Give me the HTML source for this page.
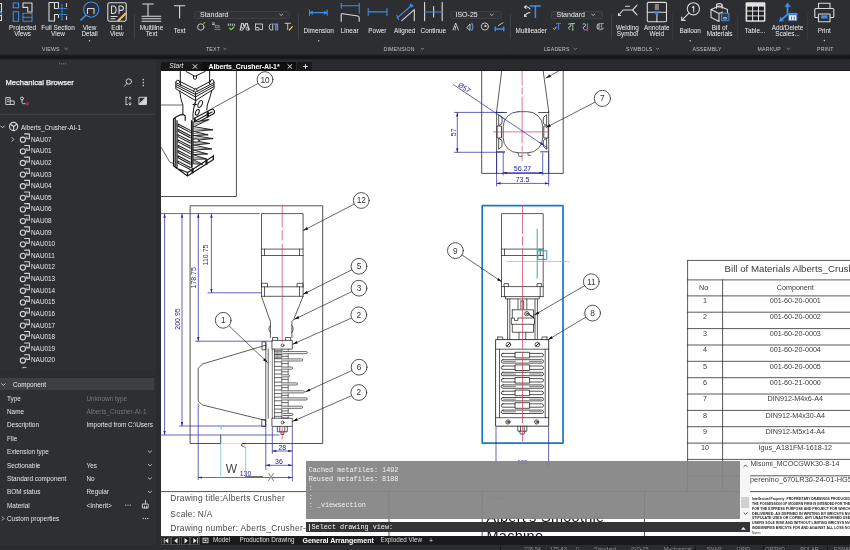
<!DOCTYPE html>
<html lang="en">
<head>
<meta charset="utf-8">
<title>Alberts_Crusher-AI-1 - Mechanical Drawing</title>
<style>
*{box-sizing:border-box;margin:0;padding:0}
html,body{width:850px;height:550px;overflow:hidden;background:#1c1c1e}
body{position:relative;filter:blur(.4px);font-family:"Liberation Sans",sans-serif;color:#e4e4e4;font-size:6.5px;line-height:1}
.abs{position:absolute}
#ribbon{position:absolute;left:0;top:0;width:850px;height:55px;background:#2c2e32}
#band{position:absolute;left:0;top:54px;width:850px;height:6px;background:linear-gradient(#2a2c30 0%,#18191b 30%,#141516 55%,#18191b 75%,#2b2d31 100%)}
#panel{position:absolute;left:0;top:60px;width:156px;height:485px;background:#2d2f33}
#pstrip{position:absolute;left:156px;top:60px;width:5px;height:485px;background:#292b2e}
#topgap{position:absolute;left:161px;top:60px;width:689px;height:2px;background:#2a2b2e}
#tabbar{position:absolute;left:161px;top:62px;width:689px;height:9px;background:#2a2b2e;border-bottom:1px solid #161617}
#canvas{position:absolute;left:161px;top:71px;width:689px;height:465px;background:#fff;overflow:hidden}
#btabs{position:absolute;left:161px;top:536px;width:689px;height:9px;background:#1a1a1c}
#status{position:absolute;left:0;top:545px;width:850px;height:5px;background:#2b2c30;overflow:hidden}
.rl{position:absolute;text-align:center;white-space:nowrap;font-size:6.4px;line-height:5.8px;color:#efefef;transform:translateX(-50%)}
.gl{position:absolute;white-space:nowrap;font-size:5.2px;color:#c2c2c4;letter-spacing:.2px;top:46.5px}
.sep{position:absolute;width:1px;background:#3d4045;top:14px;height:25px}
.dd{position:absolute;height:8px;top:11px;border:1px solid #3c3f44;border-radius:1.5px;background:#303236;font-size:7px;line-height:6px;color:#f0f0f0;padding-left:5px}
.tr{position:absolute;left:0;width:156px;height:11.68px;font-size:6.4px;color:#e6e6e6;white-space:nowrap}
.tr span{position:absolute;top:3.1px}
.pr{position:absolute;left:0;width:156px;height:13.4px;font-size:6.4px;color:#e6e6e6;white-space:nowrap}
.pr b{position:absolute;left:7px;top:4.2px;font-weight:normal}
.pr i{position:absolute;left:86.5px;top:4.2px;font-style:normal}
.pr i.dim{color:#77777a}
</style>
</head>
<body>
<div id="ribbon">
<div class="dd" style="left:194px;width:96px">Standard</div>
<div class="dd" style="left:449.500px;width:52px">ISO-25</div>
<div class="dd" style="left:550.500px;width:52px">Standard</div>
<svg class="abs" style="left:0;top:0" width="850" height="55" viewBox="0 0 850 55" fill="none" stroke-linecap="round" stroke-linejoin="round">
<g stroke="#d9d9d9" stroke-width="1.1">
<!-- cut-off icon far left -->
<path d="M0 3.5h1.5v8.5h-1.5M0 15.5h1.5v5h-1.5"/>
<!-- Projected views -->
<path d="M23 3h9v9h-4.2v-4.6h-4.8z"/>
<!-- Full section -->
<path d="M49 2.5h5.5v6h4v-3M49 2.5v18.5h5.5v-6.5h4v3M58.5 5.5v-3h-3" />
<!-- View detail inner -->
<path d="M87.5 13.5v-5h6.5v5"/>
<!-- Edit view -->
<rect x="107.8" y="2.8" width="18.4" height="18.4" rx="1.6"/>
<path d="M111.5 6v7.5h1.6q3 0 3-3.7t-3-3.8zM119 13.5v-7.5h2.2q2.2 0 2.200 2.200t-2.200 2.200h-2.200M111 16.500h6M111 18.800h4"/>
<!-- Multiline text -->
<path d="M142.700 4h10.600M148 4v12M142 16.300h18.800M142 18.800h18.800M142 21.200h18.800"/>
<!-- Text -->
<path d="M174.400 5.800h10.400M179.600 5.800v12.200"/>
<!-- Linear lower -->
<path d="M341.200 21.300v-6.500q0-1.300 1.500-1.100l15.200 2.300q1.300.2 1.300 1.500v3.800"/>
<!-- Aligned -->
<path d="M401.800 20.600l12.500-11v11"/>
<!-- Continue -->
<path d="M424.600 2.200v18.400M442.200 2.200v18.400M433.600 6.600v10.400"/>
<!-- Multileader arrows -->
<path d="M530 9q-1.500-3-5.500-2M524.500 7l1.800-1.200M524.500 7l1.500 1.400M530 12.500q-4 .5-5.500 4M524.500 16.500l.2-2M524.500 16.500l2-.3"/>
<!-- Welding -->
<path d="M618.500 15.500l4.500-5.500h9.500l4.500-4.800M632.500 10l4.500 4.800M618.500 15.500v-2M618.500 15.500h2M625.500 6.300h4"/>
<!-- Annotate weld -->
<rect x="647.300" y="2.400" width="19.200" height="19.400" rx="1.200"/>
<path d="M647.300 12.200h19.200M656.900 12.200v9.600M655.300 5h3.200M655.300 7h3.200M655.300 9h3.200"/>
<!-- Balloon -->
<circle cx="693.400" cy="8.800" r="6.100"/>
<path d="M689 13.200l-7.300 7.200M681.700 20.400v-3.400M681.700 20.400h3.400M692.300 7.500l1.400-1.200v5.600" />
<!-- BOM -->
<path d="M711 9.500l8-3.500 8.500 3.500v3M711 9.500v8l8 4v-8zM719 13.500l3.500-1.500"/>
<ellipse cx="719.300" cy="5.300" rx="2.800" ry="1.700"/>
<path d="M716.500 5.300v3M722.100 5.300v3"/>
<!-- Print -->
<path d="M818.500 8.500v-5.300h11.500v5.300M818 17.500h-2.200q-1 0-1-1v-7q0-1 1-1h17q1 0 1 1v7q0 1-1 1h-2.300M818.500 14v7.800h11.500v-7.800z"/>
</g>
<!-- Table icon -->
<rect x="745.600" y="2.300" width="19.800" height="19.500" rx="1.200" fill="#e3e3e3"/>
<g fill="#1f1f22"><rect x="747.200" y="6.600" width="4.900" height="3.900"/><rect x="753.100" y="6.600" width="4.900" height="3.900"/><rect x="759" y="6.600" width="4.900" height="3.900"/><rect x="747.200" y="11.500" width="4.900" height="3.900"/><rect x="753.100" y="11.500" width="4.900" height="3.900"/><rect x="759" y="11.500" width="4.900" height="3.900"/><rect x="747.200" y="16.400" width="4.900" height="3.900"/><rect x="753.100" y="16.400" width="4.900" height="3.900"/><rect x="759" y="16.400" width="4.900" height="3.900"/></g>
<g stroke="#3d8fe8" stroke-width="1.100">
<!-- cut-off icon -->
<path d="M0 12.500q1.800.5 1.800 2"/>
<!-- Projected views blue -->
<rect x="13.200" y="3" width="5.400" height="4.800"/>
<rect x="13.200" y="11.800" width="5.400" height="9.400"/>
<rect x="23" y="13.200" width="9" height="8" stroke-dasharray="1.600 1.100"/>
<path d="M23 17.200h9" stroke-dasharray="1.600 1.100"/>
<!-- Full section blue dashes -->
<path d="M62 4.500v15.500M58.500 8.500h8.500M58.500 14.500h8.500" stroke-dasharray="1.500 1.300"/>
<path d="M66.500 3.500v3M66.500 16.500v3" stroke="#d9d9d9"/>
<!-- View detail -->
<circle cx="91.200" cy="9.600" r="7.600"/>
<path d="M85.800 15.200l-4.800 4.900" stroke-width="1.500"/>
<!-- Dimension -->
<path d="M309.500 12.600h17.600M309.500 10v5.200M327.200 10v5.200" />
<path d="M310 12.600l2.500-1.600v3.200zM326.700 12.600l-2.500-1.600v3.200z" fill="#3d8fe8" stroke-width=".5"/>
<!-- Linear top -->
<path d="M341.200 5.800h18M341.200 3.300v5M359.200 3.300v9.700"/>
<!-- Power -->
<path d="M368.200 11.900h18.800M368.200 8.500v6.900M387 8.500v6.900"/>
<!-- Aligned blue -->
<path d="M397.200 17.800l14.300-12.300M396.800 15.200l1.800 4.200M410.300 4l2.600 2.300"/>
<path d="M412.200 4.800l-2.600.5 1.800 1.900z" fill="#3d8fe8" stroke-width=".5"/>
<!-- Continue blue -->
<path d="M424.600 12h17.600"/>
<!-- Multileader T -->
<path d="M530.200 5.900h10.200M535.400 5.900v11.600" stroke-width="1.500"/>
<!-- Annotate weld triangle -->
<path d="M654 11.500h5.800l-2.900 3.700z" fill="#3d8fe8" stroke-width=".5"/>
<!-- BOM small box -->
<rect x="721.500" y="13.300" width="7.500" height="7.500" rx="1" fill="#26415f" stroke="#4a86c8"/>
<path d="M724 17.500h2.500v1.500h-2.500z" stroke="#cfd8e3" stroke-width=".7"/>
<!-- Add/Delete scales -->
<path d="M787.500 5v9.500l-6.500 5.500" stroke-width="1.700"/>
<path d="M787.500 3.200l-2.600 3.400h5.200zM779.500 21.200l1-4 3 3.200z" fill="#3d8fe8" stroke-width=".6"/>
<rect x="789" y="13.400" width="7.800" height="7.200" fill="#e8e8e8" stroke="#4a86c8" stroke-width=".9"/>
<path d="M789 14.400h7.800" stroke="#3d8fe8" stroke-width="1.600"/>
<path d="M791.500 17v2.200M794.300 17v2.200" stroke="#555" stroke-width=".8"/>
<!-- Print blue -->
<rect x="821" y="15.300" width="6.500" height="3.200" fill="#3d8fe8" stroke="none"/>
</g>
<!-- Edit view pencil -->
<path d="M118.500 20.500l6.800-6.800" stroke="#f2c230" stroke-width="2.200"/>
<path d="M117.800 21.300l1-2 1 1z" fill="#ddd" stroke="none"/>
<!-- small text icons row 1 -->
<g stroke="#d0d0d0" stroke-width=".9">
<circle cx="200.800" cy="27" r="3.200"/><path d="M203.500 23.800l1.500-1.500" stroke="#e8d44a"/>
<path d="M212.500 23h2M212.500 24.600h2" /><path d="M215.500 25.500h3.500v2h-3.500zM215 29.500h5" stroke="#4a86e8" stroke-width="1.200"/>
<path d="M228.300 24v1.500M230.300 24v1.500M232.300 24v1.500M234.300 24v1.500" /><path d="M229.500 28.200l1.600 1.500 2.800-2.700" stroke="#7ed321" stroke-width="1.200"/>
<path d="M240.200 30l1.500-6.500h1.500l1.300 4 1.300-4h1.500l1.500 6.500" stroke-width="1.200"/><circle cx="241.800" cy="28.800" r="1.500"/><circle cx="247.600" cy="28.800" r="1.500"/>
<path d="M255.500 24h7v5.500h-2.500M255.500 24v3M256 27.500h3v2.500h-3z"/>
<path d="M271 24q-1.800 0-1.800 3t1.800 3h1.700v-6" /><path d="M274 24.200h3.500v5.800M275.800 24.200v5.800" stroke="#6c8fd6" stroke-width="1.300"/>
<path d="M285 23.300h5.500M287.700 23.300v6.200" /><path d="M289.300 30l3-3.300" stroke="#e8d44a" stroke-width="1.200"/>
<!-- dimension small icons -->
<path d="M453 30l2.700-7 2.700 7M455 30l.7-3.500" />
<path d="M467 27.500l3-3.500v6z"/><path d="M471.800 23.200q2 3.500 0 7" stroke="#5a8fe0" stroke-width="1.200"/>
<circle cx="484.900" cy="26.500" r="3.600"/><circle cx="485.300" cy="26" r=".7" fill="#d0d0d0"/>
<path d="M495.300 27v3.800M503.700 27v3.800M495.300 29h8.400" stroke="#3d8fe8" stroke-width="1.500"/><path d="M498.500 25.500l4.500-2.800" stroke="#e8d8a0"/>
<!-- leaders small icons -->
<path d="M553.500 28.500l1.200 1 1.500-2.500"/><path d="M556.500 23.500h4M558.500 23.500v5.800" stroke="#4a78e0" stroke-width="1.200"/>
<path d="M568.500 24q1.500-1 2.500.5t-2 2.500q-1 1 .5 2.500" /><path d="M571 23.500h3.500M572.800 23.500v6" stroke="#9fc7b0"/><circle cx="572.700" cy="30" r=".8" fill="#9ad14a" stroke="none"/>
<path d="M583 24q1.500-1 2.500.5t-2 2.500q-1 1 .5 2.500"/><path d="M587.500 23.500v6.300h-3" stroke="#5a78d8" stroke-width="1.200"/><circle cx="587.500" cy="30" r="1" fill="#e0302a" stroke="none"/>
<path d="M597.500 24.500q-1 2 0 4.500h1.500v-4.500z"/><path d="M599 23.500h4.500M601.500 23.500v4q0 2-2 2.500" stroke="#6c8fd6" stroke-width="1.100"/><path d="M601.500 30l2-2" />
</g>
<!-- dropdown chevrons -->
<g stroke="#bdbdbd" stroke-width=".9"><path d="M279.700 14.200l1.500 1.300 1.500-1.300M490.300 14.200l1.500 1.300 1.500-1.300M591.700 14.200l1.500 1.300 1.500-1.300"/></g>
<!-- group chevrons -->
<g stroke="#9d9da0" stroke-width=".8"><path d="M64.800 48.300l1.300 1.200 1.300-1.200M223.700 48.300l1.300 1.200 1.300-1.200M421.100 48.300l1.300 1.200 1.300-1.200M574 48.300l1.300 1.200 1.300-1.200M656.100 48.300l1.300 1.200 1.300-1.200M786.900 48.300l1.300 1.200 1.300-1.200"/></g>
<!-- little dots under labels -->
<g fill="#d8d8d8" stroke="none"><circle cx="89.500" cy="40.800" r=".7"/><circle cx="318.700" cy="40.800" r=".7"/><circle cx="690.200" cy="40.800" r=".7"/><circle cx="824.300" cy="40.500" r=".7"/></g>
</svg>
<div class="sep" style="left:134px"></div><div class="sep" style="left:298px"></div><div class="sep" style="left:510px"></div><div class="sep" style="left:611px"></div><div class="sep" style="left:672px;background:#35373b"></div><div class="sep" style="left:737px;background:#35373b"></div><div class="sep" style="left:807px;background:#35373b"></div>
<div class="rl" style="left:22.600px;top:25px">Projected<br>Views</div>
<div class="rl" style="left:58px;top:25px">Full Section<br>View</div>
<div class="rl" style="left:89.600px;top:25px">View<br>Detail</div>
<div class="rl" style="left:116.800px;top:25px">Edit<br>View</div>
<div class="rl" style="left:151.500px;top:25px">Multiline<br>Text</div>
<div class="rl" style="left:179.600px;top:28px">Text</div>
<div class="rl" style="left:318.700px;top:28px">Dimension</div>
<div class="rl" style="left:349.700px;top:28px">Linear</div>
<div class="rl" style="left:377.400px;top:28px">Power</div>
<div class="rl" style="left:404.700px;top:28px">Aligned</div>
<div class="rl" style="left:433.400px;top:28px">Continue</div>
<div class="rl" style="left:531.200px;top:28px">Multileader</div>
<div class="rl" style="left:627.400px;top:24.800px">Welding<br>Symbol</div>
<div class="rl" style="left:656.800px;top:24.800px">Annotate<br>Weld</div>
<div class="rl" style="left:690.200px;top:28px">Balloon</div>
<div class="rl" style="left:719.600px;top:24.800px">Bill of<br>Materials</div>
<div class="rl" style="left:755.100px;top:28px">Table...</div>
<div class="rl" style="left:787.500px;top:24.800px">Add/Delete<br>Scales...</div>
<div class="rl" style="left:824.300px;top:28px">Print</div>
<div class="gl" style="left:42px">VIEWS</div>
<div class="gl" style="left:206px">TEXT</div>
<div class="gl" style="left:383.500px">DIMENSION</div>
<div class="gl" style="left:544px">LEADERS</div>
<div class="gl" style="left:626px">SYMBOLS</div>
<div class="gl" style="left:692.500px">ASSEMBLY</div>
<div class="gl" style="left:757.500px">MARKUP</div>
<div class="gl" style="left:817px">PRINT</div>
</div>
<div id="band"></div>
<div id="panel">
<svg class="abs" style="left:0;top:0;z-index:2" width="156" height="487" viewBox="0 60 156 487" fill="none" stroke="#d6d6d6" stroke-width=".9" stroke-linecap="round" stroke-linejoin="round"><g fill="#8a8a8d" stroke="none"><circle cx="59.500" cy="63.800" r=".6"/><circle cx="61.500" cy="63.800" r=".6"/><circle cx="63.500" cy="63.800" r=".6"/><circle cx="65.500" cy="63.800" r=".6"/></g><circle cx="128.800" cy="81.500" r="2.700"/><path d="M126.800 83.600l-2.300 2.600"/><g fill="#d6d6d6" stroke="none"><circle cx="143.300" cy="79.600" r=".8"/><circle cx="143.300" cy="82.600" r=".8"/><circle cx="143.300" cy="85.600" r=".8"/></g><path d="M6.200 97.500h4v7h-4zM10.200 101h4v3.500h-4M7.500 99.500h1.500M7.500 101.500h1.500"/><circle cx="22" cy="98.500" r="1.500"/><path d="M22 100v2.500q0 1.200 1.500 1.200h1.500"/><circle cx="27.300" cy="103.800" r="1.600" fill="#c02444" stroke="none"/><path d="M126 97.300v7.200M126 97.300h1.500M126 104.500h1.500M130 97v2.500M130 102.500v2.500M129 98.200l1-1.200 1 1.200M129 103.800l1 1.200 1-1.200"/><rect x="139.300" y="97.300" width="7" height="7"/><path d="M146.300 97.300v7h-7z" fill="#d6d6d6"/><path d="M.8 126l1.800 1.800 1.800-1.800"/><circle cx="13.600" cy="126.500" r="4.100" stroke-width="1.200"/><path d="M13.600 126.500v4M13.600 126.500l-3.200-2.300M13.600 126.500l3.200-2.300" stroke-width="1.100"/><path d="M12 137.5l1.800 1.900-1.800 1.900"/><path d="M24.600 133.90h4.800v4.800h-2.600" stroke-width="1.100"/><circle cx="22.900" cy="139.70" r="2.600" stroke-width="1.100"/><path d="M26.800 136.80v1.800"/><path d="M24.600 145.52h4.800v4.800h-2.600" stroke-width="1.100"/><circle cx="22.900" cy="151.32" r="2.600" stroke-width="1.100"/><path d="M26.800 148.42v1.800"/><path d="M24.600 157.14h4.800v4.800h-2.600" stroke-width="1.100"/><circle cx="22.900" cy="162.94" r="2.600" stroke-width="1.100"/><path d="M26.800 160.04v1.800"/><path d="M24.600 168.76h4.800v4.800h-2.600" stroke-width="1.100"/><circle cx="22.900" cy="174.56" r="2.600" stroke-width="1.100"/><path d="M26.800 171.66v1.800"/><path d="M24.600 180.38h4.800v4.800h-2.600" stroke-width="1.100"/><circle cx="22.900" cy="186.18" r="2.600" stroke-width="1.100"/><path d="M26.800 183.28v1.800"/><path d="M24.600 192.00h4.800v4.800h-2.600" stroke-width="1.100"/><circle cx="22.900" cy="197.80" r="2.600" stroke-width="1.100"/><path d="M26.800 194.90v1.800"/><path d="M24.600 203.62h4.800v4.800h-2.600" stroke-width="1.100"/><circle cx="22.900" cy="209.42" r="2.600" stroke-width="1.100"/><path d="M26.800 206.52v1.800"/><path d="M24.600 215.24h4.800v4.800h-2.600" stroke-width="1.100"/><circle cx="22.900" cy="221.04" r="2.600" stroke-width="1.100"/><path d="M26.800 218.14v1.800"/><path d="M24.600 226.86h4.800v4.800h-2.600" stroke-width="1.100"/><circle cx="22.900" cy="232.66" r="2.600" stroke-width="1.100"/><path d="M26.800 229.76v1.800"/><path d="M24.600 238.48h4.800v4.800h-2.600" stroke-width="1.100"/><circle cx="22.900" cy="244.28" r="2.600" stroke-width="1.100"/><path d="M26.800 241.38v1.800"/><path d="M24.600 250.10h4.800v4.800h-2.600" stroke-width="1.100"/><circle cx="22.900" cy="255.90" r="2.600" stroke-width="1.100"/><path d="M26.800 253.00v1.800"/><path d="M24.600 261.72h4.800v4.800h-2.600" stroke-width="1.100"/><circle cx="22.900" cy="267.52" r="2.600" stroke-width="1.100"/><path d="M26.800 264.62v1.800"/><path d="M24.600 273.34h4.800v4.800h-2.600" stroke-width="1.100"/><circle cx="22.900" cy="279.14" r="2.600" stroke-width="1.100"/><path d="M26.800 276.24v1.800"/><path d="M24.600 284.96h4.800v4.800h-2.600" stroke-width="1.100"/><circle cx="22.900" cy="290.76" r="2.600" stroke-width="1.100"/><path d="M26.800 287.86v1.800"/><path d="M24.600 296.58h4.800v4.800h-2.600" stroke-width="1.100"/><circle cx="22.900" cy="302.38" r="2.600" stroke-width="1.100"/><path d="M26.800 299.48v1.800"/><path d="M24.600 308.20h4.800v4.800h-2.600" stroke-width="1.100"/><circle cx="22.900" cy="314.00" r="2.600" stroke-width="1.100"/><path d="M26.800 311.10v1.800"/><path d="M24.600 319.82h4.800v4.800h-2.600" stroke-width="1.100"/><circle cx="22.900" cy="325.62" r="2.600" stroke-width="1.100"/><path d="M26.800 322.72v1.800"/><path d="M24.600 331.44h4.800v4.800h-2.600" stroke-width="1.100"/><circle cx="22.900" cy="337.24" r="2.600" stroke-width="1.100"/><path d="M26.800 334.34v1.800"/><path d="M24.600 343.06h4.800v4.800h-2.600" stroke-width="1.100"/><circle cx="22.900" cy="348.86" r="2.600" stroke-width="1.100"/><path d="M26.800 345.96v1.800"/><path d="M24.600 354.68h4.800v4.800h-2.600" stroke-width="1.100"/><circle cx="22.900" cy="360.48" r="2.600" stroke-width="1.100"/><path d="M26.800 357.58v1.800"/><path d="M22.500 367.800q1.500-1 3.500-.4"/><path d="M1.800 383.800l1.700 1.700 1.700-1.700"/><path d="M2.200 516.800l1.700 1.700-1.700 1.700"/><path d="M148.300 451.0l1.600 1.500 1.600-1.500" stroke="#c8c8c8"/><path d="M148.300 464.4l1.600 1.500 1.600-1.500" stroke="#c8c8c8"/><path d="M148.300 477.8l1.600 1.500 1.600-1.500" stroke="#c8c8c8"/><path d="M148.300 491.2l1.600 1.500 1.600-1.500" stroke="#c8c8c8"/><g fill="#d6d6d6" stroke="none"><circle cx="125.7" cy="505.1" r=".65"/><circle cx="128.0" cy="505.1" r=".65"/><circle cx="130.3" cy="505.1" r=".65"/></g><g fill="#d6d6d6" stroke="none"><circle cx="143.2" cy="518.5" r=".65"/><circle cx="145.5" cy="518.5" r=".65"/><circle cx="147.8" cy="518.5" r=".65"/></g><path d="M145.500 500.500v3.500M142.800 504h5.400v4h-5.400zM144.500 506.300v1.700M146.500 506.300v1.700"/></svg>
<div class="abs" style="left:0;top:-60px;width:156px">
<div class="abs" style="left:5.500px;top:79px;font-size:7.600px;color:#f4f4f4;-webkit-text-stroke:.25px #f4f4f4;white-space:nowrap">Mechanical Browser</div>
<div class="abs" style="left:0;top:114px;width:155px;height:1px;background:#3b3e43"></div>
<div class="tr" style="top:121.500px"><span style="left:21px">Alberts_Crusher-AI-1</span></div>
<div class="tr" style="top:133.56px"><span style="left:31px">NAU07</span></div>
<div class="tr" style="top:145.18px"><span style="left:31px">NAU01</span></div>
<div class="tr" style="top:156.80px"><span style="left:31px">NAU02</span></div>
<div class="tr" style="top:168.42px"><span style="left:31px">NAU03</span></div>
<div class="tr" style="top:180.04px"><span style="left:31px">NAU04</span></div>
<div class="tr" style="top:191.66px"><span style="left:31px">NAU05</span></div>
<div class="tr" style="top:203.28px"><span style="left:31px">NAU06</span></div>
<div class="tr" style="top:214.90px"><span style="left:31px">NAU08</span></div>
<div class="tr" style="top:226.52px"><span style="left:31px">NAU09</span></div>
<div class="tr" style="top:238.14px"><span style="left:31px">NAU010</span></div>
<div class="tr" style="top:249.76px"><span style="left:31px">NAU011</span></div>
<div class="tr" style="top:261.38px"><span style="left:31px">NAU012</span></div>
<div class="tr" style="top:273.00px"><span style="left:31px">NAU013</span></div>
<div class="tr" style="top:284.62px"><span style="left:31px">NAU014</span></div>
<div class="tr" style="top:296.24px"><span style="left:31px">NAU015</span></div>
<div class="tr" style="top:307.86px"><span style="left:31px">NAU016</span></div>
<div class="tr" style="top:319.48px"><span style="left:31px">NAU017</span></div>
<div class="tr" style="top:331.10px"><span style="left:31px">NAU018</span></div>
<div class="tr" style="top:342.72px"><span style="left:31px">NAU019</span></div>
<div class="tr" style="top:354.34px"><span style="left:31px">NAU020</span></div>
<div class="abs" style="left:0;top:370px;width:156px;height:8px;background:#2b2d30"></div>
<div class="abs" style="left:0;top:378px;width:154px;height:12.300px;background:#3c3f44"></div>
<div class="abs" style="left:13px;top:382.200px;font-size:6.400px;white-space:nowrap;color:#ececec">Component</div>
<div class="pr" style="top:391.4px"><b>Type</b><i class="dim">Unknown type</i></div>
<div class="pr" style="top:404.8px"><b>Name</b><i class="dim">Alberts_Crusher-AI-1</i></div>
<div class="pr" style="top:418.2px"><b>Description</b><i>Imported from C:\Users</i></div>
<div class="pr" style="top:431.6px"><b>File</b><i></i></div>
<div class="pr" style="top:445.0px"><b>Extension type</b><i></i></div>
<div class="pr" style="top:458.4px"><b>Sectionable</b><i>Yes</i></div>
<div class="pr" style="top:471.8px"><b>Standard component</b><i>No</i></div>
<div class="pr" style="top:485.2px"><b>BOM status</b><i>Regular</i></div>
<div class="pr" style="top:498.6px"><b>Material</b><i>&lt;Inherit&gt;</i></div>
<div class="pr" style="top:512.0px"><b>Custom properties</b><i></i></div>
</div>
</div>
<div id="pstrip"></div>
<div id="topgap"></div>
<div id="tabbar">
<div class="abs" style="left:0;top:0;width:41px;height:9px;background:#19191b"></div>
<div class="abs" style="left:41px;top:0;width:94px;height:9px;background:#0f0f11"></div>
<div class="abs" style="left:136px;top:0;width:14.500px;height:9px;background:#19191b"></div>
<div class="abs" style="left:8.300px;top:1px;font-size:6.600px;color:#e8e8e8;font-style:italic">Start</div>
<div class="abs" style="left:47.500px;top:.8px;font-size:7px;font-weight:bold;color:#fff;white-space:nowrap;letter-spacing:-.1px">Alberts_Crusher-AI-1*</div>
<svg class="abs" style="left:0;top:0" width="160" height="9" viewBox="0 0 160 9" stroke="#e6e6e6" stroke-width="1" fill="none"><path d="M31.800 2.300l4.400 4.400M36.200 2.300l-4.400 4.400M126.600 2.300l4.400 4.400M131 2.300l-4.400 4.400M144.500 2.200v4.600M142.200 4.500h4.600"/></svg>
</div>
<div id="canvas"><!--DRAW--><svg class="abs" style="left:0;top:0" width="689" height="466" viewBox="161 71 689 466" fill="none" stroke="#262626" stroke-width=".75" stroke-linecap="round" stroke-linejoin="round" font-family="Liberation Sans, sans-serif">
<defs><marker id="ah" viewBox="0 0 10 6" refX="10" refY="3" markerWidth="6.800" markerHeight="2.900" orient="auto" markerUnits="userSpaceOnUse"><path d="M0 0L10 3L0 6z" fill="#111" stroke="none"/></marker>
<marker id="bh" viewBox="0 0 10 6" refX="10" refY="3" markerWidth="4.200" markerHeight="2.400" orient="auto-start-reverse" markerUnits="userSpaceOnUse"><path d="M0 0L10 3L0 6z" fill="#2222a0" stroke="none"/></marker><clipPath id="cp1"><rect x="480" y="517.500" width="200" height="30"/></clipPath></defs>
<g id="v1">
<path d="M161 196.500h75.400V71" stroke-width=".8"/>
<path d="M161 105h21.500M161 147l9 15.500 3.500 .8" stroke-width=".7"/>
<g stroke="#1a1a1a" stroke-width="1">
<path d="M180.300 71v14.500M209.600 71v13M186 71.500l9 4.800 10-4.800M193.500 75.500v3l1.500 .9 1.500-.9v-3"/>
<path d="M175.800 82.600l19.700 9.600 18.600-9.600M175.800 82.600v6.200l19.700 11.800 18.600-11.800v-6.200M176.300 84.700l19.200 9.800 18.200-9.800M176.300 86.700l19.200 10.200 18.200-10.200M195.500 92.200v8.400M179 81l16.500 8.300 15.500-8.300" />
<path d="M175.800 82.600q0-2.400 2-2.400t2 2.400M193.600 91.300q0-2.400 1.900-2.400t1.900 2.400M210.200 82q0-2.400 1.900-2.400t1.900 2.400" fill="#fff"/>
<path d="M179.700 91.200q.8 8 3.200 14v9.500M211.800 90.500q-2 8-4.500 14.500l-.5 5M196 100.500q-2.500 6-3 13v6"/>
<ellipse cx="200.200" cy="104" rx="1.900" ry="3.700" transform="rotate(24 200.200 104)"/><ellipse cx="197.300" cy="112.300" rx="1.700" ry="3" transform="rotate(24 197.300 112.300)"/>
<path d="M193 104.500h3.500M194.800 103v3"/>
<path d="M194 118.500l17-9q2.400-1 3.300 1.100t-1.200 3.500l-17.300 9.300M194.500 121.500l17.500-9.400M208 111.200q1.300 2.400 0 4.800" stroke-width="1.100"/>
<path d="M207.600 113v3.600M194.800 119v3.500" stroke-width="2"/>
<path d="M173.500 118.800q3-3 9.200-4.500M173.500 118.800v47l14 10.200 25.900-16.400v-3.400M177 120.500v48l10.800 4 25.600-16.600M173.500 165.800l3.500 2.600M187.500 176v-3.500M175.200 118v48.500M182.700 114.300l2.500 1.500v4.500" stroke-width="1.200"/>
<path d="M213.400 155v4.500" stroke-width=".9"/>
<path d="M192.500 172.500v-3.500M206.500 163.800v-3.500" stroke-width="2.200"/>
<path d="M191.800 121v46" stroke-width="1.800"/>
</g>
<g stroke="#1a1a1a" stroke-width="1">
<path d="M178 124.0l12.300 6.400M178 126.0l12.300 6.400M178 124.0v2" stroke-width="1.050"/>
<path d="M178 129.3l12.300 6.400M178 131.3l12.300 6.400M178 129.3v2" stroke-width="1.050"/>
<path d="M178 134.6l12.300 6.400M178 136.6l12.300 6.400M178 134.6v2" stroke-width="1.050"/>
<path d="M178 139.9l12.300 6.400M178 141.9l12.300 6.400M178 139.9v2" stroke-width="1.050"/>
<path d="M178 145.2l12.300 6.400M178 147.2l12.300 6.400M178 145.2v2" stroke-width="1.050"/>
<path d="M178 150.5l12.300 6.400M178 152.5l12.300 6.400M178 150.5v2" stroke-width="1.050"/>
<path d="M178 155.8l12.300 6.400M178 157.8l12.300 6.400M178 155.8v2" stroke-width="1.050"/>
<path d="M178 161.1l12.300 6.400M178 163.1l12.300 6.400M178 161.1v2" stroke-width="1.050"/>
</g>
<g stroke="#1a1a1a" stroke-width=".95" fill="#fff">
<path d="M193.5 122.2L209.0 119.5L193.5 126.8z"/>
<path d="M193.5 124.5L209.0 119.5" stroke-width=".6"/>
<path d="M193.5 126.6L212.7 129.8L193.5 131.4z"/>
<path d="M193.5 129.0L212.7 129.8" stroke-width=".6"/>
<path d="M193.5 131.3L208.0 134.8L193.5 135.7z"/>
<path d="M193.5 133.5L208.0 134.8" stroke-width=".6"/>
<path d="M193.5 135.5L213.0 138.6L193.5 140.5z"/>
<path d="M193.5 138.0L213.0 138.6" stroke-width=".6"/>
<path d="M193.5 140.5L209.5 143.5L193.5 145.1z"/>
<path d="M193.5 142.8L209.5 143.5" stroke-width=".6"/>
<path d="M193.5 145.0L211.6 149.0L193.5 150.0z"/>
<path d="M193.5 147.5L211.6 149.0" stroke-width=".6"/>
<path d="M193.5 150.0L207.5 154.0L193.5 154.6z"/>
<path d="M193.5 152.3L207.5 154.0" stroke-width=".6"/>
<path d="M193.5 154.8L206.5 159.0L193.5 159.2z"/>
<path d="M193.5 157.0L206.5 159.0" stroke-width=".6"/>
<path d="M193.5 159.8L202.5 164.2L193.5 163.8z"/>
<path d="M193.5 161.8L202.5 164.2" stroke-width=".6"/>
<ellipse cx="196" cy="140.500" rx="3.200" ry="1.700"/>
</g>
</g>
<path d="M258.1 83.4L212.4 108.3" stroke-width=".7"/>
<circle cx="265.0" cy="79.6" r="7.9" fill="#fff" stroke-width=".8"/>
<text x="265.0" y="82.5" font-size="8.3" text-anchor="middle" fill="#333" stroke="none">10</text>
<path d="M354.3 204.1L303.3 230.5" marker-end="url(#ah)" stroke-width=".7"/>
<circle cx="361.3" cy="200.5" r="7.9" fill="#fff" stroke-width=".8"/>
<text x="361.3" y="203.4" font-size="8.3" text-anchor="middle" fill="#333" stroke="none">12</text>
<g id="v2">
<rect x="190.500" y="205.800" width="132.200" height="237.700" stroke-width=".8"/>
<path d="M261.500 296V213.600h41.600V296M261.500 249.100h41.600M261.500 255.500h41.600M264.500 249.100v6.400M299.500 249.100v6.400M261.500 286.800h41.600M261.500 296.300h41.600M264.500 286.800v9.500M299.500 286.800v9.500M261.500 286.800v-3.500h6v3.500M303.100 286.800v-3.500h-6v3.500"/>
<path d="M261.500 296.500l8.900 25v16M303 296.500l-9.300 23-1.800 2v16M270.400 325.500q-1.500 1-1.500 3.500t1.500 3.500M291.900 325.500q1.200 1 1.200 3.500t-1.200 3.500"/>
<path d="M272.500 340.400v-2.900h5.100v2.900M285.600 340.400v-2.900h5.100v2.900"/>
<rect x="272.300" y="340.400" width="20" height="8.700" fill="#fff"/><circle cx="282.600" cy="345.300" r="1.400"/>
<rect x="272.300" y="418.200" width="20" height="8.200" fill="#fff"/><circle cx="282.600" cy="422.500" r="1.400"/>
<path d="M277.300 426.400v5.400h10v-5.400M279.800 426.400v5.400M284.800 426.400v5.400M281 431.800v2.700h2.800v-2.700"/>
<path d="M265.800 345.200L202.500 364l-4.300 4.200v33l4.300 3.800 63.300 15.500M265.800 342.500v82M268.200 349v69.200M262.400 341.800h3.400v8h-3.400zM262.200 419.500h3.400v7h-3.400z"/>
<path d="M272.300 349.100v69.100M274.500 349.100v69.100M281.800 349.100v69.100M288.200 349.100v69.100" stroke-width=".6"/>
<path d="M283 351.6H306.2q1.100 0 1.100 1.050t-1.100 1.050H283" fill="#fff" stroke-width=".7"/>
<path d="M274.500 350.9h7.300M274.500 354.5h7.300M282 356.3h6" stroke-width=".7"/>
<path d="M283 358.9H301.6q1.100 0 1.100 1.050t-1.100 1.050H283" fill="#fff" stroke-width=".7"/>
<path d="M274.500 358.2h7.300M274.500 361.8h7.300M282 363.6h6" stroke-width=".7"/>
<path d="M283 367.1H291.6q1.100 0 1.100 1.050t-1.100 1.050H283" fill="#fff" stroke-width=".7"/>
<path d="M274.500 366.4h7.300M274.500 370.0h7.300M282 371.8h6" stroke-width=".7"/>
<path d="M283 374.8H288.4q1.100 0 1.100 1.050t-1.100 1.050H283" fill="#fff" stroke-width=".7"/>
<path d="M274.500 374.0h7.300M274.500 377.6h7.300M282 379.4h6" stroke-width=".7"/>
<path d="M283 382.9H296.5q1.100 0 1.100 1.050t-1.100 1.050H283" fill="#fff" stroke-width=".7"/>
<path d="M274.500 382.2h7.300M274.500 385.8h7.300M282 387.6h6" stroke-width=".7"/>
<path d="M283 390.8H303.4q1.100 0 1.100 1.050t-1.100 1.050H283" fill="#fff" stroke-width=".7"/>
<path d="M274.500 390.0h7.300M274.500 393.6h7.300M282 395.4h6" stroke-width=".7"/>
<path d="M283 397.9H306.2q1.100 0 1.100 1.050t-1.100 1.050H283" fill="#fff" stroke-width=".7"/>
<path d="M274.500 397.2h7.300M274.500 400.8h7.300M282 402.6h6" stroke-width=".7"/>
<path d="M283 406.2H301.6q1.100 0 1.100 1.050t-1.100 1.050H283" fill="#fff" stroke-width=".7"/>
<path d="M274.500 405.5h7.300M274.500 409.1h7.300M282 410.9h6" stroke-width=".7"/>
<path d="M283 413.4H291.9q1.100 0 1.100 1.050t-1.100 1.050H283" fill="#fff" stroke-width=".7"/>
<path d="M274.500 412.7h7.300M274.500 416.3h7.300M282 418.1h6" stroke-width=".7"/>
<path d="M275 351v8M276.300 351v8M277.600 351v8M278.900 351v8M280.200 351v8" stroke-width=".5"/>
<path d="M282.200 205v22M282.200 230.500v9.500M282.200 244v98M282.200 427v12" stroke="#d23a5a" stroke-width=".7"/>
<g stroke="#2222a0" stroke-width=".7">
<path d="M161 213.600h98.500M208 292.800h53.500M195.500 341.200h77M179.500 426h86.500M161 435h118"/>
<path d="M211.4 213.8L211.4 292.6" marker-start="url(#bh)" marker-end="url(#bh)"/>
<path d="M198.3 213.8L198.3 341.0" marker-start="url(#bh)" marker-end="url(#bh)"/>
<path d="M182.0 213.8L182.0 425.8" marker-start="url(#bh)" marker-end="url(#bh)"/>
<path d="M164.6 213.8L164.6 434.8" marker-start="url(#bh)" marker-end="url(#bh)"/>
<path d="M198.200 404v75.500M265.800 425v44.500M272.300 427v26.500M292.300 427v54"/>
<path d="M272.4 451.0L292.2 451.0" marker-start="url(#bh)" marker-end="url(#bh)"/>
<path d="M265.9 465.3L292.2 465.3" marker-start="url(#bh)" marker-end="url(#bh)"/>
<path d="M198.3 477.5L292.2 477.5" marker-start="url(#bh)" marker-end="url(#bh)"/>
</g>
<g fill="#2222a0" stroke="none" font-size="7" text-anchor="middle">
<text transform="translate(208.300 255) rotate(-90)">110.75</text>
<text transform="translate(195.500 277.800) rotate(-90)">178.75</text>
<text transform="translate(179.800 319) rotate(-90)">200.95</text>
<text x="282.300" y="449.500">28</text><text x="279" y="463.700">36</text><text x="245.500" y="476.200">130</text>
</g>
<path d="M220.700 435v42.500M245.700 448v29.500" stroke="#7fbfd6" stroke-width=".8"/><path d="M221 443.500h20.500" stroke="#f0d8d8" stroke-width="1.200"/><path d="M220.700 435v8.500" stroke="#333" stroke-width=".7"/>
<text x="221.200" y="429.600" font-size="8" fill="#7fb6e0" stroke="none" text-anchor="middle">Y</text>
<text x="231.500" y="472.500" font-size="12" fill="#444" stroke="none" text-anchor="middle">W</text>
<text x="271" y="480.700" font-size="10.500" fill="#8a8a8a" stroke="none" text-anchor="middle">X</text>
<path d="M245.200 443.700h-2.500q-1.200 0-1.200 1.300t1.200 1.300h1.300l1.200 1.500M245.700 476.600h17" stroke-width=".7"/>
</g>
<path d="M351.9 269.8L303.2 294.3" marker-end="url(#ah)" stroke-width=".7"/>
<circle cx="359.0" cy="266.3" r="7.9" fill="#fff" stroke-width=".8"/>
<text x="359.0" y="269.2" font-size="8.3" text-anchor="middle" fill="#333" stroke="none">5</text>
<path d="M351.9 291.6L294.5 319.3" marker-end="url(#ah)" stroke-width=".7"/>
<circle cx="359.0" cy="288.2" r="7.9" fill="#fff" stroke-width=".8"/>
<text x="359.0" y="291.1" font-size="8.3" text-anchor="middle" fill="#333" stroke="none">3</text>
<path d="M351.6 318.0L292.8 344.2" marker-end="url(#ah)" stroke-width=".7"/>
<circle cx="358.8" cy="314.8" r="7.9" fill="#fff" stroke-width=".8"/>
<text x="358.8" y="317.7" font-size="8.3" text-anchor="middle" fill="#333" stroke="none">2</text>
<path d="M228.9 325.7L267.5 362.5" marker-end="url(#ah)" stroke-width=".7"/>
<circle cx="223.2" cy="320.3" r="7.9" fill="#fff" stroke-width=".8"/>
<text x="223.2" y="323.2" font-size="8.3" text-anchor="middle" fill="#333" stroke="none">1</text>
<path d="M351.9 370.5L305.5 391.8" marker-end="url(#ah)" stroke-width=".7"/>
<circle cx="359.1" cy="367.2" r="7.9" fill="#fff" stroke-width=".8"/>
<text x="359.1" y="370.1" font-size="8.3" text-anchor="middle" fill="#333" stroke="none">6</text>
<path d="M351.6 395.7L292.8 421.3" marker-end="url(#ah)" stroke-width=".7"/>
<circle cx="358.8" cy="392.5" r="7.9" fill="#fff" stroke-width=".8"/>
<text x="358.8" y="395.4" font-size="8.3" text-anchor="middle" fill="#333" stroke="none">2</text>
<g id="v3">
<path d="M481.700 71v102.400h81.500V71" stroke-width=".8"/>
<path d="M501.700 71l-5.100 40.500M543.200 71l5.500 40.500M496.600 111.500v62M548.700 111.500v62"/>
<rect x="503.200" y="111.700" width="39.500" height="41.100" rx="15" fill="#fff"/>
<path d="M496.600 112.500h10M548.700 112.500h-10M496.600 151.800h8M548.700 151.800h-8M499 115l3 2.500v6l-3 2zM546.300 115l-3 2.500v6l3 2zM499 138.500l3 2v6l-3 2.500zM546.300 138.500l-3 2v6l3 2.500zM497.500 126h4v12h-4zM547.800 126h-4v12h4z" stroke-width=".8"/>
<path d="M518 152.800l.8 3M519.500 156.500l2.500-.5M528 152.800v2.500h2.500" stroke-width=".7"/>
<path d="M522.100 71v14M522.100 88v6M522.100 97v46M522.100 146v5M522.100 154v7M493.500 131.900h55" stroke="#d23a5a" stroke-width=".7"/>
<path d="M558.700 71L546 78" marker-end="url(#ah)" stroke-width=".7"/>
<g stroke="#2222a0" stroke-width=".7"><path d="M454.500 112.400h49M454.500 152.300h50M503.200 153v22M542.700 153v22M496.600 153v33M548.700 153v33M453.500 84.700l94 63.200"/>
<path d="M457.3 112.5L457.3 152.2" marker-start="url(#bh)" marker-end="url(#bh)"/>
<path d="M503.3 172.7L542.6 172.7" marker-start="url(#bh)" marker-end="url(#bh)"/>
<path d="M496.7 183.4L548.6 183.4" marker-start="url(#bh)" marker-end="url(#bh)"/>
<path d="M500.500 116.300l4.300 2.900M543.800 145.400l-4.300-2.900" marker-end="url(#bh)"/></g>
<g fill="#2222a0" stroke="none" font-size="7" text-anchor="middle"><text transform="translate(456 132.300) rotate(-90)">57</text><text x="522.500" y="171">56.27</text><text x="522.500" y="181.700">73.5</text><text transform="translate(463 89.800) rotate(34)">Ø57</text></g>
</g>
<path d="M595.2 102.1L546.0 127.5" marker-end="url(#ah)" stroke-width=".7"/>
<circle cx="602.4" cy="98.4" r="8.1" fill="#fff" stroke-width=".8"/>
<text x="602.4" y="101.3" font-size="8.3" text-anchor="middle" fill="#333" stroke="none">7</text>
<g id="v4">
<rect x="482.200" y="205.600" width="80.800" height="237.500" stroke="#1b79c4" stroke-width="1.700"/>
<path d="M501.500 296.600V213.600h41.700V296.600M501.500 249.100h41.700M501.500 255.500h41.700M504.500 249.100v6.400M540.200 249.100v6.400M501.500 286.600h41.700M501.500 296.600h41.700M504.500 286.600v10M540.200 286.600v10M504 286.600v-3h4.400v3M541.700 286.600v-3h-4.600v3"/>
<path d="M507.600 299v40M509.800 299v40M535 299v40M537.400 299v40M505.500 296.600v2.300h33.800v-2.300M518 299v10.300M526.800 299v10.300M520.900 301v8M523.600 301v8M520.900 301h2.700"/>
<path d="M512.300 309.800h21.200v8.200h1v6.300h-1v8h-21.200v-8h-1v-6.300h3.200v2.600h3.300v-2.600h15.700M512.300 309.800v8.200M512.300 324.300h21.200" fill="#fff"/>
<circle cx="526.800" cy="313.700" r="2.200"/><circle cx="526.800" cy="313.700" r=".8"/><path d="M529 314.500l4.500 3" stroke-width="1.100"/>
<path d="M519 332.300v8.700M525.800 332.300v8.700"/>
<rect x="496" y="339.600" width="52.700" height="86.600" fill="#fff" stroke-width=".9"/>
<path d="M496 349.200h52.700M496 417.700h52.700M497.700 337h5v2.600M547 337h-5v2.600M499.500 349.200v68.500M545.200 349.200v68.500M497.700 337v2.600M547 337v2.600"/>
<circle cx="508.4" cy="344.600" r="2.300"/><path d="M506.9 346l3-2.800" stroke-width="1"/>
<circle cx="537.4" cy="344.600" r="2.300"/><path d="M535.9 346l3-2.800" stroke-width="1"/>
<circle cx="507.9" cy="422" r="2.100"/><circle cx="507.9" cy="422" r=".9"/>
<circle cx="536.7" cy="422" r="2.100"/><circle cx="536.7" cy="422" r=".9"/>
<rect x="501.300" y="353.4" width="42.200" height="3.400" rx="1.700" fill="#fff" stroke-width=".8"/>
<rect x="515.400" y="352.3" width="14.200" height="5.600" fill="#fff" stroke-width=".8"/>
<rect x="501.300" y="359.7" width="42.200" height="3.400" rx="1.700" fill="#fff" stroke-width=".8"/>
<path d="M503.500 361.4h12M529.500 361.4h12" stroke-width=".6"/>
<rect x="501.300" y="366.0" width="42.200" height="3.400" rx="1.700" fill="#fff" stroke-width=".8"/>
<rect x="515.400" y="364.9" width="14.200" height="5.600" fill="#fff" stroke-width=".8"/>
<rect x="501.300" y="372.3" width="42.200" height="3.400" rx="1.700" fill="#fff" stroke-width=".8"/>
<path d="M503.500 374.0h12M529.500 374.0h12" stroke-width=".6"/>
<rect x="501.300" y="378.6" width="42.200" height="3.400" rx="1.700" fill="#fff" stroke-width=".8"/>
<rect x="515.400" y="377.5" width="14.200" height="5.600" fill="#fff" stroke-width=".8"/>
<rect x="501.300" y="384.9" width="42.200" height="3.400" rx="1.700" fill="#fff" stroke-width=".8"/>
<path d="M503.500 386.6h12M529.500 386.6h12" stroke-width=".6"/>
<rect x="501.300" y="391.2" width="42.200" height="3.400" rx="1.700" fill="#fff" stroke-width=".8"/>
<rect x="515.400" y="390.1" width="14.200" height="5.600" fill="#fff" stroke-width=".8"/>
<rect x="501.300" y="397.5" width="42.200" height="3.400" rx="1.700" fill="#fff" stroke-width=".8"/>
<path d="M503.500 399.2h12M529.500 399.2h12" stroke-width=".6"/>
<rect x="501.300" y="403.8" width="42.200" height="3.400" rx="1.700" fill="#fff" stroke-width=".8"/>
<rect x="515.400" y="402.7" width="14.200" height="5.600" fill="#fff" stroke-width=".8"/>
<rect x="501.300" y="410.1" width="42.200" height="3.400" rx="1.700" fill="#fff" stroke-width=".8"/>
<path d="M503.500 411.8h12M529.500 411.8h12" stroke-width=".6"/>
<path d="M517.800 426.200v5h9v-5M520.500 426.200v5M524.200 426.200v5M519.500 431.200l1 3h3.500l1-3"/>
<path d="M522.500 205.600v28M522.500 237v8M522.500 249v100M522.500 353v70M522.500 426v15" stroke="#d23a5a" stroke-width=".7"/>
<path d="M537.200 229.300v49" stroke="#2a9aa6" stroke-width=".9"/><rect x="538.200" y="250.800" width="8.600" height="8.600" stroke="#2a9aa6" stroke-width="1"/><path d="M507 261.500h62" stroke="#9aa" stroke-width=".6"/>
<g stroke="#2222a0" stroke-width=".7"><path d="M496 427v40M548.600 427v40"/></g>
<text x="522.300" y="463.500" font-size="6.200" fill="#2222a0" stroke="none" text-anchor="middle">136</text>
</g>
<path d="M462.0 255.0L501.8 281.8" marker-end="url(#ah)" stroke-width=".7"/>
<circle cx="455.4" cy="250.6" r="7.9" fill="#fff" stroke-width=".8"/>
<text x="455.4" y="253.5" font-size="8.3" text-anchor="middle" fill="#333" stroke="none">9</text>
<path d="M584.5 285.7L534.5 315.0" marker-end="url(#ah)" stroke-width=".7"/>
<circle cx="591.3" cy="281.7" r="7.9" fill="#fff" stroke-width=".8"/>
<text x="591.3" y="284.6" font-size="8.3" text-anchor="middle" fill="#333" stroke="none">11</text>
<path d="M585.8 317.2L548.0 339.8" marker-end="url(#ah)" stroke-width=".7"/>
<circle cx="592.6" cy="313.1" r="7.9" fill="#fff" stroke-width=".8"/>
<text x="592.6" y="316.0" font-size="8.3" text-anchor="middle" fill="#333" stroke="none">8</text>
<g id="bom" stroke="#222" stroke-width=".75">
<path d="M687.600 260.400V490M722.600 279.900V490"/>
<path d="M687.600 260.4H850"/>
<path d="M687.600 279.9H850"/>
<path d="M687.600 295.9H850"/>
<path d="M687.600 312.2H850"/>
<path d="M687.600 328.6H850"/>
<path d="M687.600 345.0H850"/>
<path d="M687.600 361.3H850"/>
<path d="M687.600 377.7H850"/>
<path d="M687.600 394.0H850"/>
<path d="M687.600 410.4H850"/>
<path d="M687.600 426.7H850"/>
<path d="M687.600 443.1H850"/>
<path d="M687.600 459.4H850"/>
<path d="M687.600 475.8H850"/>
</g>
<g fill="#3a3a3a" stroke="none" text-anchor="middle">
<text x="724.600" y="272.400" font-size="9.700" text-anchor="start">Bill of Materials Alberts_Crusher-AI-1</text>
<text x="703.600" y="289.800" font-size="7.200">No</text><text x="795.300" y="289.800" font-size="7.200">Component</text>
<text x="705" y="303.1" font-size="7.200">1</text><text x="795.300" y="303.1" font-size="7.200">001-60-20-0001</text>
<text x="705" y="319.4" font-size="7.200">2</text><text x="795.300" y="319.4" font-size="7.200">001-60-20-0002</text>
<text x="705" y="335.8" font-size="7.200">3</text><text x="795.300" y="335.8" font-size="7.200">001-60-20-0003</text>
<text x="705" y="352.1" font-size="7.200">4</text><text x="795.300" y="352.1" font-size="7.200">001-60-20-0004</text>
<text x="705" y="368.5" font-size="7.200">5</text><text x="795.300" y="368.5" font-size="7.200">001-60-20-0005</text>
<text x="705" y="384.8" font-size="7.200">6</text><text x="795.300" y="384.8" font-size="7.200">001-60-21-0000</text>
<text x="705" y="401.2" font-size="7.200">7</text><text x="795.300" y="401.2" font-size="7.200">DIN912-M4x6-A4</text>
<text x="705" y="417.6" font-size="7.200">8</text><text x="795.300" y="417.6" font-size="7.200">DIN912-M4x30-A4</text>
<text x="705" y="433.9" font-size="7.200">9</text><text x="795.300" y="433.9" font-size="7.200">DIN912-M5x14-A4</text>
<text x="705" y="450.2" font-size="7.200">10</text><text x="795.300" y="450.2" font-size="7.200">Igus_A181FM-1618-12</text>
<text x="750.500" y="465.700" font-size="7.050" text-anchor="start">Misumi_MCOCGWK30-8-14</text>
<text x="750" y="482.300" font-size="7.400" text-anchor="start">perenino_670LR30-24-01-HG5</text>
<text x="752" y="500.3" font-size="3.700" font-weight="bold" fill="#1c1c1c" text-anchor="start" textLength="98" lengthAdjust="spacingAndGlyphs">Intellectual Property: PROPRIETARY DRAWINGS PRODUCED</text>
<text x="752" y="505.1" font-size="3.700" font-weight="bold" fill="#1c1c1c" text-anchor="start" textLength="98" lengthAdjust="spacingAndGlyphs">THE POSSESSION OF MODERN FIRM IS INTENDED FOR THE</text>
<text x="752" y="509.8" font-size="3.700" font-weight="bold" fill="#1c1c1c" text-anchor="start" textLength="98" lengthAdjust="spacingAndGlyphs">FOR THE EXPRESS PURPOSE AND PROJECT FOR WHICH</text>
<text x="752" y="514.5" font-size="3.700" font-weight="bold" fill="#1c1c1c" text-anchor="start" textLength="98" lengthAdjust="spacingAndGlyphs">DELIVERED. AS DEFINED IN WRITING BY BRICSYS NV</text>
<text x="752" y="519.3" font-size="3.700" font-weight="bold" fill="#1c1c1c" text-anchor="start" textLength="98" lengthAdjust="spacingAndGlyphs">STIPULATE USES OR COPIED. ANY UNAUTHORISED USE</text>
<text x="752" y="524.0" font-size="3.700" font-weight="bold" fill="#1c1c1c" text-anchor="start" textLength="98" lengthAdjust="spacingAndGlyphs">USERS SOLE RISK AND WITHOUT LIMITING BRICSYS NV</text>
<text x="752" y="528.8" font-size="3.700" font-weight="bold" fill="#1c1c1c" text-anchor="start" textLength="98" lengthAdjust="spacingAndGlyphs">INDEMNIFIES BRICSYS FOR AND AGAINST ALL LOSS SO</text>
<text x="752" y="534" font-size="3.300" fill="#333" text-anchor="start">Notes:</text>
</g>
<path d="M161 491.600h690M389 491.600V537M482.200 491.600V537M644.500 491.600V537" stroke-width=".8"/>
<g fill="#484848" stroke="none" font-size="8.400" letter-spacing=".28"><text x="170.300" y="501.300">Drawing title:Alberts Crusher</text><text x="170.300" y="516.500">Scale: N/A</text><text x="170.300" y="530.700">Drawing number: Aberts_Crusher-AI-1</text>
<text x="486.500" y="522" font-size="14.500" fill="#111" clip-path="url(#cp1)">Albert's Smoothie</text><text x="486.500" y="540.500" font-size="14.500" fill="#111">Machine</text>
<text x="487" y="500" font-size="5" fill="#999">Project:</text></g>
</svg><!--/DRAW-->
<div class="abs" style="left:145px;top:389.500px;width:434.300px;height:58.200px;background:rgba(133,133,133,.94)"></div>
<div class="abs" style="left:579.300px;top:390px;width:9.900px;height:60.500px;background:#f6f6f6"></div>
<div class="abs" style="left:580.300px;top:426px;width:7.700px;height:11px;background:#d0d0d0"></div>
<div class="abs" style="left:145px;top:450.500px;width:444px;height:10.500px;background:#343436"></div>
<pre class="abs" style="left:147.700px;top:394.800px;font-family:'Liberation Mono',monospace;font-size:6.800px;line-height:8.900px;color:#f2f2f2">Cached metafiles: 1492
Reused metafiles: 8188
:
:
: _viewsection</pre>
<pre class="abs" style="left:150.500px;top:452.300px;font-family:'Liberation Mono',monospace;font-size:6.800px;line-height:8px;color:#f4f4f4">Select drawing view:</pre>
<div class="abs" style="left:147.500px;top:452.500px;width:1px;height:7.500px;background:#ddd"></div>
<svg class="abs" style="left:580px;top:390px" width="10" height="72" viewBox="0 0 10 72" fill="none" stroke="#333" stroke-width=".9"><path d="M2.700 5.800l1.800-1.800 1.800 1.800M2.700 51.500l1.800 1.800 1.800-1.800"/><path d="M0 68.800l2.400-2.800 2.400 2.800z" fill="#f0f0f0" stroke="none"/></svg>
</div>
<div id="btabs">
<svg class="abs" style="left:0;top:-.5px" width="60" height="10" viewBox="0 0 60 10" fill="#e8e8e8" stroke="#e8e8e8" stroke-width=".8"><path d="M3.200 2v5.500" fill="none"/><path d="M7.300 2l-3.400 2.750 3.400 2.750zM16.500 2l-3.400 2.750 3.400 2.750zM23.500 2l3.400 2.750-3.400 2.750zM32.300 2l3.400 2.750-3.400 2.750z" stroke="none"/><path d="M36.600 2v5.500" fill="none"/><g fill="none" stroke="#777" stroke-width=".6"><rect x=".8" y=".8" width="8.400" height="8"/><rect x="10.300" y=".8" width="8.400" height="8"/><rect x="20.300" y=".8" width="8.400" height="8"/><rect x="29.800" y=".8" width="8.400" height="8"/></g><rect x="42" y="2.200" width="5" height="4.500" fill="none" stroke-width=".8"/><rect x="43.500" y="3.500" width="2" height="1.800" stroke="none"/></svg>
<div class="abs" style="left:52px;top:.9px;font-size:6.300px;color:#ddd;white-space:nowrap">Model</div>
<div class="abs" style="left:78.500px;top:.9px;font-size:6.300px;color:#ddd;white-space:nowrap">Production Drawing</div>
<div class="abs" style="left:141.500px;top:.5px;font-size:7px;font-weight:bold;color:#fff;white-space:nowrap">General Arrangement</div>
<div class="abs" style="left:219.500px;top:.9px;font-size:6.300px;color:#ddd;white-space:nowrap">Exploded View</div>
<div class="abs" style="left:268px;top:.5px;font-size:7px;color:#ddd">+</div>
</div>
<div id="status">
<svg class="abs" style="left:0;top:0" width="850" height="5" viewBox="0 0 850 5" stroke="#161618" stroke-width="1"><path d="M500.500 1v4M577.500 1v4M608.500 1v4M634.500 1v4M669.500 1v4M695.500 1v4M716.500 1v4M738.500 1v4M763.500 1v4M785.500 1v4M806.500 1v4M827.500 1v4"/></svg>
<div class="abs" style="left:524px;top:1.800px;font-size:5.500px;color:#8d8d90;white-space:nowrap;word-spacing:6px">228.54, 175.43, 0 &nbsp;Standard &nbsp;ISO-25 &nbsp;Mechanical &nbsp;SNAP &nbsp;GRID &nbsp;ORTHO &nbsp;POLAR &nbsp;ESNAP &nbsp;STRACK &nbsp;LWT &nbsp;TILE &nbsp;DUCS &nbsp;DYN</div>
</div>
</body>
</html>
